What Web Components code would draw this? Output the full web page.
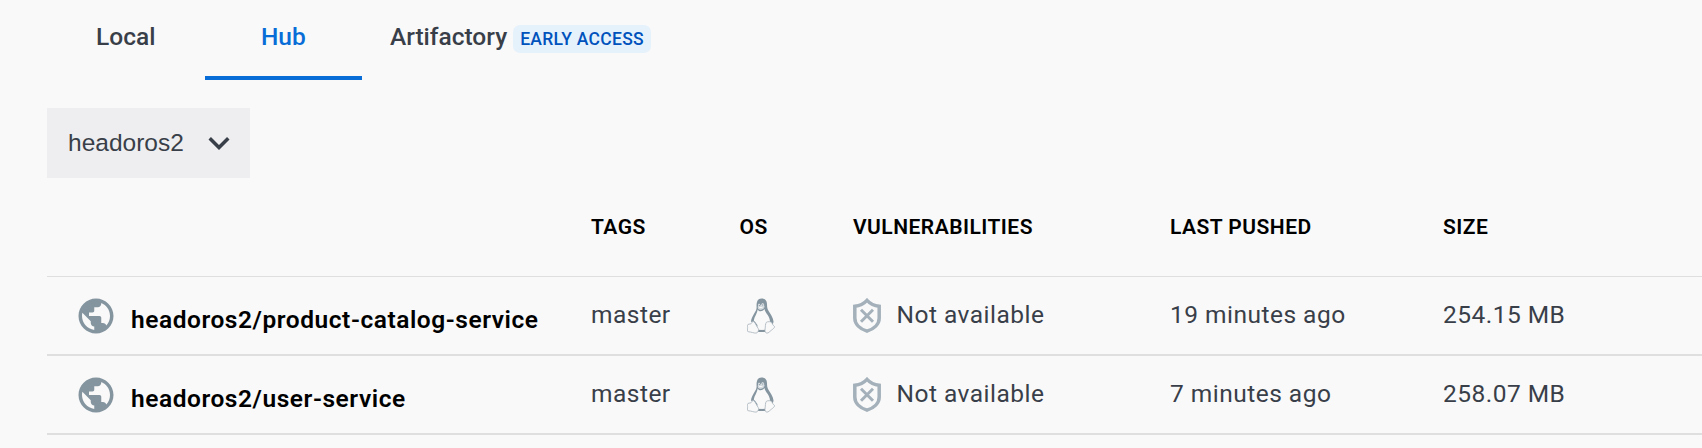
<!DOCTYPE html>
<html lang="en">
<head>
<meta charset="utf-8">
<title>Images on Hub</title>
<style>
html,body{margin:0;background:#f9f9f9}
body{height:448px;overflow:hidden}
</style>
</head>
<body>
<hub-images></hub-images>
<script>
const define = (name, html) => customElements.define(name, class extends HTMLElement {
  constructor() {
    super();
    const t = document.createElement('template');
    t.innerHTML = html;
    this.attachShadow({ mode: 'open' }).append(t.content.cloneNode(true));
  }
});

define('early-badge', `<style>
:host{display:block;box-sizing:border-box;height:28px;margin-top:4px;padding:0 7px;border-radius:7px;background:#e5f2fc;color:#0052bd;font:500 17.5px/28px Roboto,sans-serif;letter-spacing:.3px;white-space:nowrap}
</style><slot></slot>`);

define('nav-tab', `<style>
:host{display:flex;box-sizing:border-box;height:80px;padding:0 49.600px 2px 49px;border-bottom:4px solid transparent;align-items:center;gap:6px;color:#393f49;font:500 24.5px/28px Roboto,sans-serif;white-space:nowrap}
:host([active]){color:#086dd7;border-color:#086dd7;padding-left:56px;padding-right:56.200px}
</style><span><slot></slot></span><slot name="badge"></slot>`);

define('account-select', `<style>
:host{display:flex;box-sizing:border-box;width:203px;height:70px;padding:0 10px 0 21px;align-items:center;justify-content:space-between;background:#eeeef0;color:#393f49;font:24.5px/28px "Liberation Sans",Arial,sans-serif}
svg{width:42px;height:42px;fill:#393f49}
</style><slot></slot><svg viewBox="0 0 24 24"><path d="M7.41 8.59 12 13.17l4.59-4.58L18 10l-6 6-6-6z"/></svg>`);

define('globe-icon', `<style>:host{display:block;width:42px;height:42px}svg{display:block}</style>
<svg width="42" height="42" viewBox="0 0 24 24" fill="#8495a0"><path d="M12 2C6.480 2 2 6.480 2 12s4.480 10 10 10 10-4.480 10-10S17.520 2 12 2zm-1 17.930c-3.950-.49-7-3.850-7-7.930 0-.62.08-1.210.21-1.790L9 15v1c0 1.100.9 2 2 2v1.930zm6.900-2.540c-.26-.81-1-1.390-1.900-1.390h-1v-3c0-.55-.45-1-1-1H8v-2h2c.55 0 1-.45 1-1V7h2c1.100 0 2-.9 2-2v-.41c2.930 1.190 5 4.060 5 7.410 0 2.080-.8 3.970-2.100 5.390z"/></svg>`);

define('shield-icon', `<style>:host{display:block;width:28px;height:36px}svg{display:block}</style>
<svg width="28" height="36" viewBox="0 0 28 36" fill="none" stroke="#a4b1bb" stroke-width="3.5"><path d="M14 2.400C11.200 5.400 7 7.800 1.800 8.300V20c0 6.200 5.200 11 12.200 13.200 7-2.200 12.200-7 12.200-13.200V8.300C21 7.800 16.800 5.400 14 2.400z"/><path d="m8 11.700 12 12m0-12-12 12" stroke-width="3"/></svg>`);

define('linux-icon', `<style>:host{display:block;width:28px;height:36px}svg{display:block}</style>
<svg width="28" height="36" viewBox="0 0 28 36"><g fill="#8495a0">
<path d="M14.500.400c3.800 0 5.400 2.300 5.500 5.500.1 2.900.1 4.600 1.600 7 1.700 2.900 4.500 6.400 4.900 10.300.1 1.200-.3 2.200-.9 3H7.600L4 23.500c.1-2.700 1.700-5.500 3.200-8 1.600-2.900 2.500-3.700 2.400-6.500-.2-4.900.7-8.600 4.900-8.600z"/>
<path d="M8 31.700h11.500v2.300H9.500z"/></g>
<path d="M10.600 11.500c.8 1.300 1.800 1.900 3.100 1.800 1.500-.1 2.900-1.100 3.700-2.300.9 4.200 5.600 7.300 5.600 12.500 0 4.500-3.300 8.300-8.700 8.300-4 0-6.800-3.200-7.500-8 0-4.600 3.300-7.700 3.800-12.300z" fill="#f9f9f9"/>
<path d="M6.600 22.600c1.400 1 3.100 3.300 4 5.100l-1 2-3.800-4.700z" fill="#8495a0"/>
<path d="M11.300 8c-.4-1.300 0-2.200.8-2.200s1.200.7 1.200 1.600l1-.1c-.1-1.200.5-2 1.400-2 1.100 0 1.700 1.100 1.400 2.500.7.800.4 2-.4 2.600-1.700 1.200-3.900 1.700-5.100.8-.8-.7-1.300-2.300-.3-3.200z" fill="#e3e7ea"/>
<path d="M11.200 9.300c1.500-1.300 3.600-1.100 5.700-.2-1.800 1.400-3.800 2.200-5.700.2z" fill="#f9f9f9" stroke="#b5c0c7" stroke-width=".5"/>
<circle cx="12.400" cy="7.300" r=".6" fill="#8495a0"/><circle cx="15.800" cy="7" r=".65" fill="#8495a0"/>
<path d="M1 26.400c1.500-.6 3 0 3.600-1.300.5-1.300 1.400-2 2.400-1.200 1.500 1.200 3 5 4.200 6.600.9 1.400.1 4.200-2.100 4.600-2.300.1-5-1.200-8.100-1.400-1.300-.2-.3-2.600-.4-4.300-.1-1.100-.4-2.400.4-3zM19.300 24.400c.8-1 4.900-1 5.600.3.300 1.200 1 2.600 2.600 3.800.4 1-1.600 2.700-3.200 3.800-1.700 1.300-2.700 2.900-4.500 2.800-1.800-.3-2-2.100-1.700-4.200.4-2.200.1-5.100 1.200-6.500z" fill="#f9f9f9" stroke="#a7b3bb" stroke-width=".8"/>
</svg>`);

const columns = 'display:grid;grid-template-columns:544px 148px 114px 317px 273px 1fr;box-sizing:border-box';

define('table-head', `<style>
:host{${columns};height:99px;padding-bottom:1px;border-bottom:1px solid #dfdfdf;align-items:center;color:#000;font:600 21px/24px Roboto,sans-serif;letter-spacing:.47px}
.os{padding-left:.6px}
</style><span></span><span>TAGS</span><span class="os">OS</span><span>VULNERABILITIES</span><span>LAST PUSHED</span><span>SIZE</span>`);

define('image-row', `<style>
:host{${columns};height:79px;border-bottom:2px solid #dfdfdf;align-items:center;color:#393f49;font:24.5px/28px Roboto,sans-serif;letter-spacing:.48px;white-space:nowrap}
.t{padding-bottom:2px}
.n{display:flex;align-items:center;padding-left:28px;gap:14px}
.n b{font-weight:600;color:#000;padding-top:8px;letter-spacing:.55px}
linux-icon{margin-left:8px}
.v{display:flex;align-items:center;gap:15.500px}
</style><div class="n"><globe-icon></globe-icon><b><slot name="name"></slot></b></div>
<div class="t">master</div><linux-icon></linux-icon>
<div class="v"><shield-icon></shield-icon><span class="t">Not available</span></div>
<div class="t"><slot name="pushed"></slot></div><div class="t"><slot name="size"></slot></div>`);

define('hub-images', `<style>
:host{display:block;padding-left:47px}
nav{display:flex;margin-bottom:28px}
</style>
<nav><nav-tab>Local</nav-tab><nav-tab active>Hub</nav-tab><nav-tab style="padding-left:28px">Artifactory<early-badge slot="badge">EARLY ACCESS</early-badge></nav-tab></nav>
<account-select>headoros2</account-select>
<table-head></table-head>
<image-row><span slot="name">headoros2/product-catalog-service</span><span slot="pushed">19 minutes ago</span><span slot="size">254.15 MB</span></image-row>
<image-row><span slot="name">headoros2/user-service</span><span slot="pushed">7 minutes ago</span><span slot="size">258.07 MB</span></image-row>`);
</script>
</body>
</html>
